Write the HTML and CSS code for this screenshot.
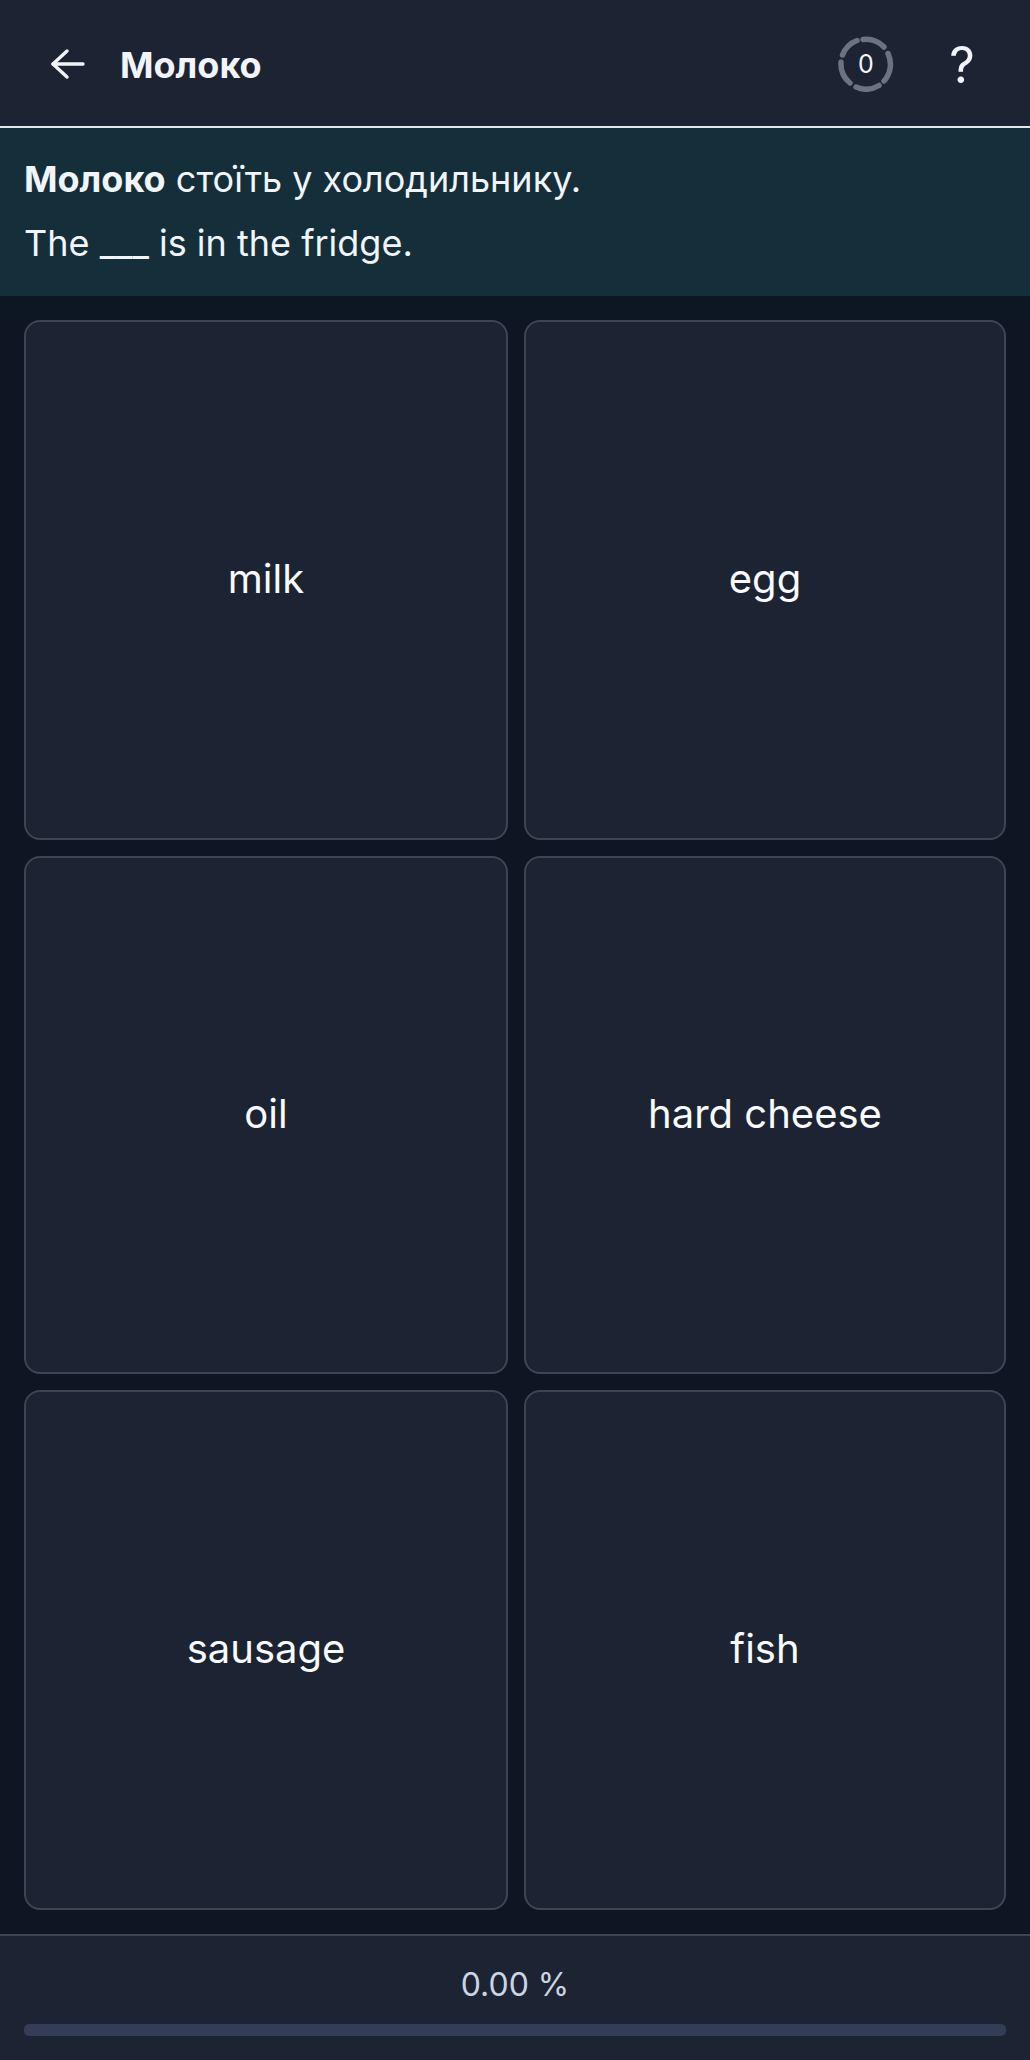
FILE: index.html
```html
<!DOCTYPE html>
<html lang="uk">
<head>
<meta charset="utf-8">
<title>Молоко</title>
<link rel="stylesheet" href="styles.css">
</head>
<body>
<div class="app">
  <header class="topbar">
    <svg class="back" width="40" height="40" viewBox="0 0 40 40" fill="none" stroke="#f1f5f9" stroke-width="3.400" stroke-linecap="round" stroke-linejoin="round"><path d="M5 20H35"/><path d="M19 7L5 20L19 33"/></svg>
    <h1 class="title">Молоко</h1>
    <div class="counter">
      <svg class="ring" width="56" height="56" viewBox="0 0 56 56" fill="none" stroke="#6b7280" stroke-width="5.500" stroke-linecap="round"><path d="M25 3.500A25 25 0 0 1 46 11"/><path d="M50 17.500A25 25 0 0 1 46 45"/><path d="M41 49.500A25 25 0 0 1 18 51"/><path d="M12 47A25 25 0 0 1 3 26"/><path d="M4.500 19A25 25 0 0 1 19 4.500"/></svg>
      <span class="count">0</span>
    </div>
    <span class="help">?</span>
  </header>
  <section class="sentence">
    <p class="line"><strong>Молоко</strong> стоїть у холодильнику.</p>
    <p class="line">The ___ is in the fridge.</p>
  </section>
  <main class="grid">
    <button class="card">milk</button>
    <button class="card">egg</button>
    <button class="card">oil</button>
    <button class="card">hard cheese</button>
    <button class="card">sausage</button>
    <button class="card">fish</button>
  </main>
  <footer class="footer">
    <div class="percent">0.00 %</div>
    <div class="track"></div>
  </footer>
</div>
</body>
</html>
```
FILE: styles.css
```css
* { box-sizing: border-box; }
html, body { margin: 0; padding: 0; }
body { background: #0f172a; font-family: Inter, "Liberation Sans", sans-serif; color: #f1f5f9; }
.app { width: 1030px; height: 2060px; display: flex; flex-direction: column; background: #0f1623; }
.topbar { height: 128px; flex: none; display: flex; align-items: center; background: #1c2333; border-bottom: 2px solid #e5e7eb; padding: 2px 55px 0 48px; }
.back { flex: none; }
.title { margin: 2px 0 0 32px; font-size: 36px; line-height: 54px; font-weight: 700; flex: 1; }
.counter { position: relative; width: 56px; height: 56px; display: flex; align-items: center; justify-content: center; margin-right: 55px; }
.ring { position: absolute; inset: 0; }
.count { font-size: 25px; line-height: 32px; font-weight: 400; }
.help { font-size: 50px; line-height: 50px; width: 26px; text-align: center; font-weight: 400; margin-top: 2px; }
.sentence { height: 168px; flex: none; padding: 24px 24px 0; background: #142f3a; }
.line { margin: 0 0 10px; font-size: 36px; line-height: 54px; }
.grid { flex: 1; min-height: 0; display: grid; grid-template-columns: 484px 482px; grid-template-rows: 520px 518px 520px; gap: 16px; padding: 24px; }
.card { background: #1c2333; border: 2px solid #3d4454; border-radius: 16px; color: #f8fafc; font-family: inherit; font-size: 40px; padding: 0 0 3px; }
.footer { height: 126px; flex: none; background: #1c2333; border-top: 2px solid #3d4454; padding: 25px 24px 0; }
.percent { text-align: center; font-size: 32px; line-height: 48px; color: #cbd5e1; }
.track { height: 12px; margin-top: 15px; border-radius: 5px; background: #333d56; }
```
